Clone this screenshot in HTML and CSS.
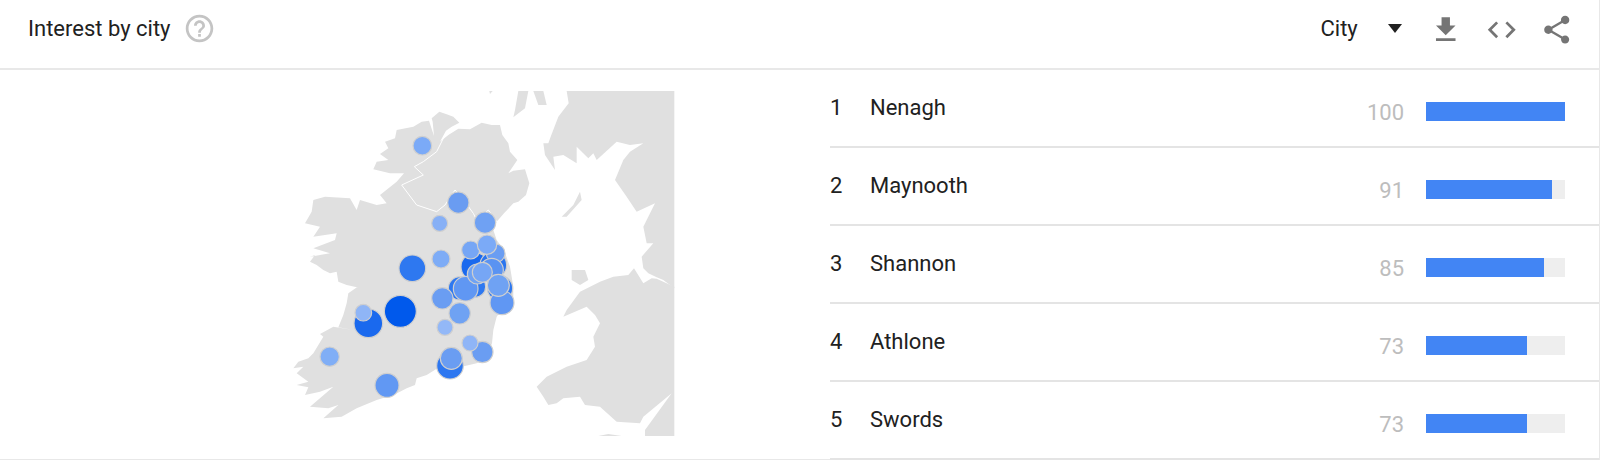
FILE: index.html
```html
<!DOCTYPE html>
<html lang="en">
<head>
<meta charset="utf-8">
<title>Interest by city</title>
<link rel="stylesheet" href="styles.css">
</head>
<body>
<section class="card">
  <header class="head">
    <div class="title">Interest by city</div>
    <svg class="help" viewBox="0 0 24 24"><path d="M11 18h2v-2h-2v2zm1-16C6.48 2 2 6.48 2 12s4.48 10 10 10 10-4.48 10-10S17.52 2 12 2zm0 18c-4.41 0-8-3.59-8-8s3.59-8 8-8 8 3.59 8 8-3.59 8-8 8zm0-14c-2.21 0-4 1.79-4 4h2c0-1.1.9-2 2-2s2 .9 2 2c0 2-3 1.75-3 5h2c0-2.25 3-2.5 3-5 0-2.21-1.79-4-4-4z"/></svg>
    <div class="select">City</div>
    <div class="caret"></div>
    <svg class="tool tool-dl" viewBox="0 0 24 24"><path d="M19 9h-4V3H9v6H5l7 7 7-7zM5 18v2h14v-2H5z"/></svg>
    <svg class="tool tool-code" viewBox="0 0 24 24"><path d="M9.4 16.6L4.8 12l4.6-4.6L8 6l-6 6 6 6 1.4-1.4zm5.2 0l4.6-4.6-4.6-4.6L16 6l6 6-6 6-1.4-1.4z"/></svg>
    <svg class="tool tool-share" viewBox="0 0 24 24"><path d="M18 16.08c-.76 0-1.44.3-1.96.77L8.91 12.7c.05-.23.09-.46.09-.7s-.04-.47-.09-.7l7.05-4.11c.54.5 1.25.81 2.04.81 1.66 0 3-1.34 3-3s-1.34-3-3-3-3 1.34-3 3c0 .24.04.47.09.7L8.04 9.81C7.5 9.31 6.79 9 6 9c-1.66 0-3 1.34-3 3s1.34 3 3 3c.79 0 1.5-.31 2.04-.81l7.12 4.16c-.05.21-.08.43-.08.65 0 1.61 1.31 2.92 2.92 2.92 1.61 0 2.92-1.31 2.92-2.92s-1.31-2.92-2.92-2.92z"/></svg>
  </header>
  <div class="body">
    <div class="map-col">
      <svg class="map" viewBox="0 33 1200 1035">
        <g class="land">
          <path d="M478 95L500 103L520 110L538 128L515 140L498 152L480 185L505 165L535 146L570 148L605 128L635 135L660 135L667 165L685 190L690 215L712 240L685 280L700 272L735 268L748 310L738 345L715 365L700 370L672 400L650 425L640 450L650 480L672 510L690 560L700 620L700 670L665 690L650 710L640 750L636 790L620 830L590 850L545 860L510 875L470 866L440 885L410 895L405 915L380 925L360 935L340 945L290 960L230 985L185 1010L130 1015L175 975L145 985L90 980L160 920L120 935L75 945L85 922L50 915L85 905L50 880L70 860L40 865L55 845L85 835L100 820L130 770L120 762L160 740L220 750L175 742L190 705L200 670L205 640L262 600L258 628L200 615L175 605L170 575L150 580L130 570L110 555L90 545L105 525L90 530L150 520L100 505L165 480L170 460L100 470L120 440L75 430L95 395L100 360L135 350L210 355L230 390L240 360L290 375L320 370L300 345L350 305L372 280L330 280L280 268L290 245L325 240L300 222L325 205L315 185L345 175L350 150L400 140L425 125L447 122L462 168L458 125L455 115Z"/>
          <path d="M1183 620L1130 596L1115 595L1090 610L1062 565L1045 585L1000 590L960 605L900 635L860 690L850 710L920 680L945 705L960 730L940 770L945 800L920 840L860 860L800 890L770 920L790 950L805 975L830 970L850 955L900 950L915 975L960 980L1010 1025L1080 1030L1090 1010L1175 940L1095 1050V1068H1183Z"/>
          <path d="M860 33L866 70L835 110L812 170L805 190L790 190L795 225L825 270L820 230L850 225L890 250L890 200L925 235L940 220L950 240L1010 185L1050 195L1090 190L1050 215L1030 240L1005 300L1040 350L1070 395L1125 370L1090 440L1100 490L1120 490L1085 530L1090 565L1105 580L1130 592L1150 600L1183 625V33Z"/>
          <path d="M875 570L915 570L925 600L900 615L875 600Z"/>
          <path d="M900 335L880 375L845 410L860 410L905 360Z"/>
          <path d="M715 33L745 33L735 85L700 112L705 90Z"/>
          <path d="M760 33L790 33L800 75L775 75Z"/>
          <path d="M628 33L638 33L630 42Z"/>
          <path d="M955 1068L985 1062L1025 1068Z"/>
        </g>
        <path class="border" d="M530 140L490 175L470 215L430 245L403 260L430 285L365 315L410 375L470 395L495 375L525 330L540 345L580 400L590 420L625 390L650 425"/>
        <g class="dots">
          <circle cx="427" cy="197" r="28" fill="#7baaf7"/>
          <circle cx="535" cy="368" r="32" fill="#6a9cf1"/>
          <circle cx="479" cy="430" r="24" fill="#87b0f6"/>
          <circle cx="615" cy="428" r="32" fill="#6fa1f3"/>
          <circle cx="483" cy="537" r="27" fill="#7eacf6"/>
          <circle cx="397" cy="565" r="40" fill="#2e78f0"/>
          <circle cx="361" cy="694" r="48" fill="#0059ec"/>
          <circle cx="265" cy="730" r="43" fill="#1a69ee"/>
          <circle cx="250" cy="698" r="25" fill="#8fb5f6"/>
          <circle cx="149" cy="830" r="29" fill="#80aef6"/>
          <circle cx="321" cy="916" r="36" fill="#6198f3"/>
          <circle cx="510" cy="857" r="40" fill="#2d77f0"/>
          <circle cx="514" cy="835" r="33" fill="#6a9df2"/>
          <circle cx="607" cy="816" r="32" fill="#6a9df2"/>
          <circle cx="570" cy="789" r="24" fill="#8fb5f7"/>
          <circle cx="495" cy="742" r="24" fill="#93b8f7"/>
          <circle cx="585" cy="560" r="42" fill="#1a69ee"/>
          <circle cx="640" cy="555" r="40" fill="#2a75ef"/>
          <circle cx="660" cy="625" r="38" fill="#2e78f0"/>
          <circle cx="540" cy="625" r="35" fill="#2e78f0"/>
          <circle cx="585" cy="620" r="32" fill="#2e78f0"/>
          <circle cx="666" cy="668" r="36" fill="#6097f3"/>
          <circle cx="539" cy="700" r="32" fill="#6fa2f3"/>
          <circle cx="487" cy="655" r="32" fill="#6a9df2"/>
          <circle cx="647" cy="520" r="28" fill="#6a9df2"/>
          <circle cx="572" cy="510" r="27" fill="#76a6f5"/>
          <circle cx="621" cy="494" r="29" fill="#7baaf7"/>
          <circle cx="635" cy="570" r="35" fill="#5a93f2"/>
          <circle cx="557" cy="626" r="37" fill="#6097f3"/>
          <circle cx="592" cy="582" r="30" fill="#6fa2f3"/>
          <circle cx="655" cy="616" r="33" fill="#6fa2f3"/>
          <circle cx="607" cy="577" r="30" fill="#76a6f5"/>
        </g>
      </svg>
    </div>
    <ol class="list">
      <li class="row"><span class="rank">1</span><span class="name">Nenagh</span><span class="val">100</span><span class="bar"><span class="fill" style="width:100%"></span></span></li>
      <li class="row"><span class="rank">2</span><span class="name">Maynooth</span><span class="val">91</span><span class="bar"><span class="fill" style="width:91%"></span></span></li>
      <li class="row"><span class="rank">3</span><span class="name">Shannon</span><span class="val">85</span><span class="bar"><span class="fill" style="width:85%"></span></span></li>
      <li class="row"><span class="rank">4</span><span class="name">Athlone</span><span class="val">73</span><span class="bar"><span class="fill" style="width:73%"></span></span></li>
      <li class="row"><span class="rank">5</span><span class="name">Swords</span><span class="val">73</span><span class="bar"><span class="fill" style="width:73%"></span></span></li>
    </ol>
  </div>
</section>
</body>
</html>
```
FILE: styles.css
```css
* { box-sizing: border-box; }
html, body { margin: 0; padding: 0; background: #fff; }
body { font-family: Roboto, "Liberation Sans", sans-serif; color: #212121; }
.card { width: 1600px; height: 460px; border-right: 1px solid #e8e8e8; border-bottom: 1px solid #e8e8e8; }
.head { height: 70px; border-bottom: 2px solid #e8e8e8; display: flex; align-items: center; padding: 0 0 12px 28px; }
.title { font-size: 22px; width: 144px; white-space: nowrap; }
.help { width: 33px; height: 33px; fill: #c4c4c4; margin-left: 10.5px; }
.select { font-size: 22px; margin-left: auto; width: 38px; }
.caret { width: 0; height: 0; border-left: 7px solid transparent; border-right: 7px solid transparent; border-top: 9px solid #212121; margin-left: 29px; margin-top: 1px; }
.tool { width: 33.5px; height: 33.5px; fill: #757575; flex: none; margin-top: 3px; }
.tool-dl { margin-left: 27px; }
.tool-code { margin-left: 23px; }
.tool-share { margin-left: 21px; margin-right: 26px; }
.body { display: flex; height: 389px; }
.map-col { width: 830px; padding: 21px 0 0 280px; flex: none; }
.map { display: block; width: 400px; height: 345px; }
.land { fill: #e0e0e0; }
.border { fill: none; stroke: #fff; stroke-width: 3; }
.dots circle { stroke: #cfcfcf; stroke-width: 3.5; }
.list { list-style: none; margin: 0; padding: 0; flex: 1; }
.row { height: 78px; border-bottom: 2px solid #e4e4e4; display: flex; font-size: 22px; line-height: 24px; }
.rank { width: 40px; padding-top: 26px; }
.name { flex: 1; padding-top: 26px; }
.val { width: 70px; text-align: right; color: #bdbdbd; padding-top: 31px; }
.bar { width: 139px; height: 19px; background: #eee; margin: 32px 34px 0 22px; display: block; }
.fill { display: block; height: 100%; background: #4285f4; }
```
